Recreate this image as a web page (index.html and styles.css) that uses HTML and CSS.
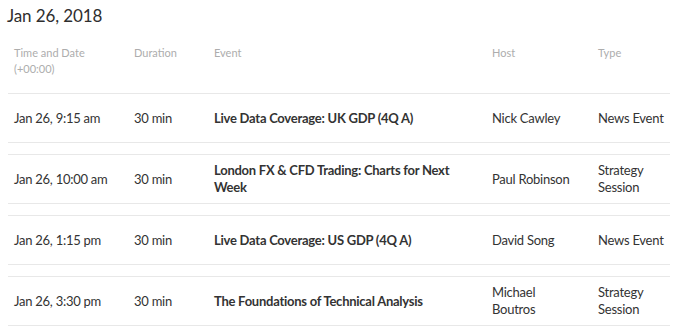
FILE: index.html
```html
<!DOCTYPE html>
<html lang="en">
<head>
<meta charset="utf-8">
<title>Events</title>
<link rel="stylesheet" href="styles.css">
</head>
<body>
<div class="page">
  <h2 class="day-title">Jan 26, 2018</h2>
  <div class="schedule">
    <div class="row head">
      <div class="cell">Time and Date (+00:00)</div>
      <div class="cell">Duration</div>
      <div class="cell">Event</div>
      <div class="cell">Host</div>
      <div class="cell">Type</div>
    </div>
    <div class="row item first">
      <div class="cell">Jan 26, 9:15 am</div>
      <div class="cell">30 min</div>
      <div class="cell event">Live Data Coverage: UK GDP (4Q A)</div>
      <div class="cell">Nick Cawley</div>
      <div class="cell">News Event</div>
    </div>
    <div class="row item">
      <div class="cell">Jan 26, 10:00 am</div>
      <div class="cell">30 min</div>
      <div class="cell event">London FX &amp; CFD Trading: Charts for Next Week</div>
      <div class="cell">Paul Robinson</div>
      <div class="cell">Strategy Session</div>
    </div>
    <div class="row item">
      <div class="cell">Jan 26, 1:15 pm</div>
      <div class="cell">30 min</div>
      <div class="cell event">Live Data Coverage: US GDP (4Q A)</div>
      <div class="cell">David Song</div>
      <div class="cell">News Event</div>
    </div>
    <div class="row item">
      <div class="cell">Jan 26, 3:30 pm</div>
      <div class="cell">30 min</div>
      <div class="cell event">The Foundations of Technical Analysis</div>
      <div class="cell">Michael Boutros</div>
      <div class="cell">Strategy Session</div>
    </div>
  </div>
</div>
</body>
</html>
```

FILE: styles.css
```css
html, body {
  margin: 0;
  padding: 0;
  background: #ffffff;
}

body {
  font-family: Lato, "Open Sans", "Liberation Sans", sans-serif;
  color: #333333;
}

.page {
  padding: 5px 10px 0 7px;
}

.day-title {
  margin: 0;
  font-size: 17px;
  line-height: 22px;
  font-weight: 400;
  letter-spacing: -0.1px;
  color: #2e2e2e;
}

.schedule {
  display: flex;
  flex-direction: column;
  width: 662px;
  margin-left: 1px;
}

.row {
  display: grid;
  grid-template-columns: 120px 80px 278px 106px 78px;
}

.cell {
  padding: 0 12px 0 6px;
}

.cell:last-child {
  padding-right: 0;
}

.head {
  padding: 18px 0 16px;
  border-bottom: 1px solid #e8e8e8;
  font-size: 11px;
  line-height: 16px;
  color: #adadad;
}

.item {
  min-height: 34px;
  padding: 7px 0;
  align-items: center;
  font-size: 13px;
  line-height: 17px;
  letter-spacing: -0.25px;
  color: #333333;
  border-top: 1px solid #e8e8e8;
  border-bottom: 1px solid #e8e8e8;
  margin-top: 11px;
}

.item.first {
  border-top: none;
  margin-top: 0;
}

.event {
  font-weight: 700;
}
```
